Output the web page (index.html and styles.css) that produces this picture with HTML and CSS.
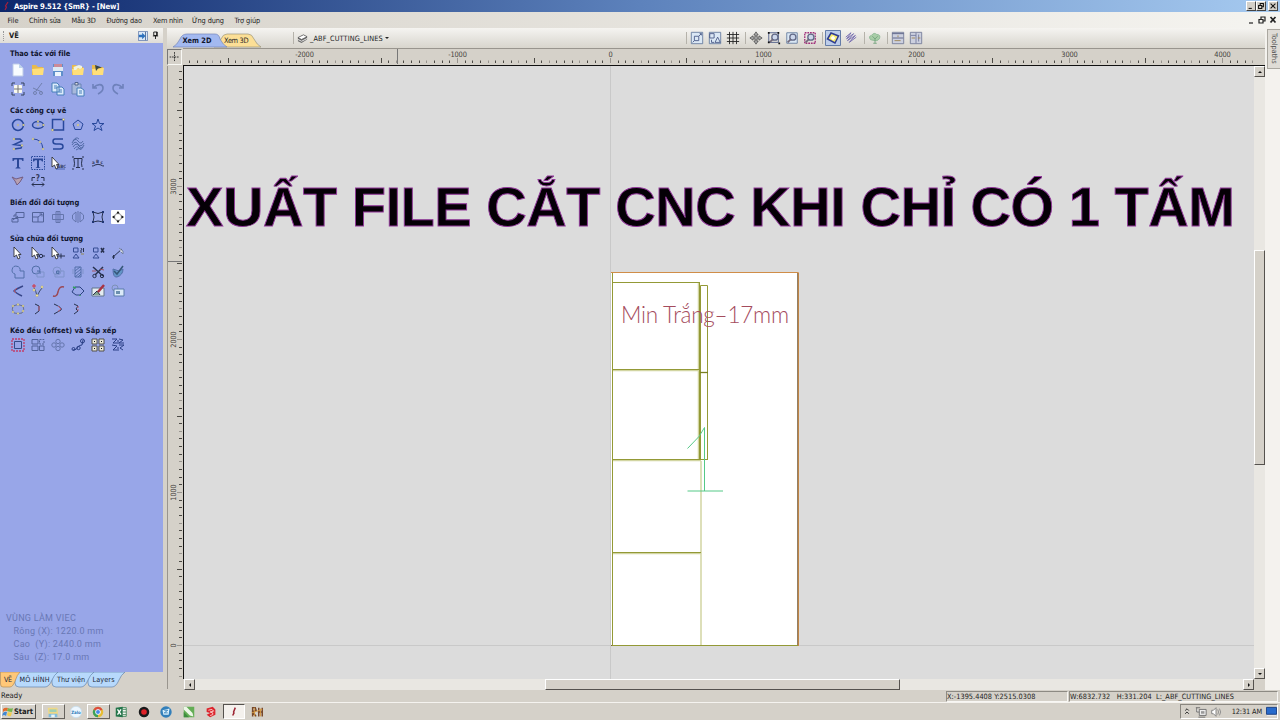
FILE: index.html
```html
<!DOCTYPE html>
<html lang="vi">
<head>
    <meta charset="UTF-8">
    <title>Aspire 9.512 {SmR} - [New]</title>
    <link rel="stylesheet" href="styles.css">
</head>
<body>
    <div class="titlebar">
        <svg class="logo" viewBox="0 0 12 12"><path d="M8 2L5.500 6L6.500 7L5 10" stroke="#a51f3c" stroke-width="1.2" fill="none"/></svg>
        <span class="title">Aspire 9.512 {SmR} - [New]</span>
        <div class="winbtns">
            <svg viewBox="0 0 10 10"><path d="M2 8H6"/></svg>
            <svg viewBox="0 0 10 10"><path d="M4 4V2H8V6H6M2 4.500H6V8H2Z"/></svg>
            <svg class="close" viewBox="0 0 10 10"><path d="M2 2L8 8M8 2L2 8"/></svg>
        </div>
    </div>
    <div class="menubar">
        <span class="m1">File</span><span class="m2">Chỉnh sửa</span><span class="m3">Mẫu 3D</span><span class="m4">Đường dao</span><span class="m5">Xem nhìn</span><span class="m6">Ứng dụng</span><span class="m7">Trợ giúp</span>
        <div class="docbtns">
            <svg viewBox="0 0 10 10"><path d="M3 8H7"/></svg>
            <svg viewBox="0 0 10 10"><path d="M4 4V2H8V6H6M2 4.500H6V8H2Z"/></svg>
            <svg viewBox="0 0 10 10"><path d="M2.500 2L7.500 7.500M7.500 2L2.500 7.500" stroke-width="1.700"/></svg>
        </div>
    </div>

    <div class="main">
        <div class="sidebar">
            <div class="side-head">
                <i class="grip"></i><b>VẼ</b>
                <svg class="dock" viewBox="0 0 12 12"><path d="M.5.5H11.500V11.500H.5Z" fill="#dce8f6" stroke="#6680ad"/><path d="M9 1V11" stroke="#42608d"/><path d="M1 4.500H5V2L9 6L5 10V7.500H1Z" fill="#2d71bd"/></svg>
                <svg class="pin" viewBox="0 0 8 10"><path d="M2 1H6V5H2ZM1 5.500H7M4 5.500V9M5.300 1V5" fill="none" stroke="#111"/></svg>
            </div>
            <div class="side-body">
                <section class="s1">
                    <h3>Thao tác với file</h3>
                    <div class="tools">
                        <svg viewBox="0 0 16 16"><path d="M3 2H9L13 6V14H3Z" fill="#f8fcff" stroke="#bdcbe7"/><path d="M9 2V6H13" fill="#bfd5ec"/></svg>
                        <svg viewBox="0 0 16 16"><use href="#folder"/></svg>
                        <svg viewBox="0 0 16 16"><path d="M3 2H13V14H3Z" fill="#5f8fca"/><path d="M4 2H12V5H4Z" fill="#cb8a98"/><path d="M3 5H13V9H3Z" fill="#dbe9f5"/><path d="M5 10H11V14H5Z" fill="#eef5fc"/></svg>
                        <svg viewBox="0 0 16 16"><use href="#folder"/><path d="M3.500 5L9 3L12 4V6L10 7L8 6L6 8L4 8Z" fill="#eff3e3"/></svg>
                        <svg viewBox="0 0 16 16"><use href="#folder"/><path d="M5 3L12 5.500L8 6.500L6 9Z" fill="#394849"/></svg>
                    </div>
                    <div class="tools line">
                        <svg viewBox="0 0 16 16"><path d="M2 5V2H5M11 2H14V5M14 11V14H11M5 14H2V11" stroke="#34435d"/><path d="M4.500 4.500H11.500V11.500H4.500Z" fill="#f9f9ee" stroke="#f9f9ee"/><path d="M8 4V12M4 8H12" stroke="#777"/></svg>
                        <svg viewBox="0 0 16 16" class="faint"><path d="M12 2L6 10M3 7L12 11"/><circle cx="5" cy="12" r="1.500"/><circle cx="11" cy="12" r="1.500"/></svg>
                        <svg viewBox="0 0 16 16"><path d="M2 2H7L9 4V11H2ZM7 6H12L14 8V14H7Z" fill="#dcebfb" stroke="#477eb9"/><path d="M4 5H7M4 7H7M9 9H12M9 11H12" stroke="#477eb9"/></svg>
                        <svg viewBox="0 0 16 16"><path d="M2 3H11V13H2Z" fill="#a7b9db" stroke="#6b84b7"/><path d="M5 1.500H8V4H5Z" fill="#ddd"/><path d="M7 7H11L14 9V15H7Z" fill="#dcebfb" stroke="#477eb9"/><path d="M9 10H12M9 12H12" stroke="#477eb9"/></svg>
                        <svg viewBox="0 0 16 16" class="undo"><path d="M3 3V7H7M3 7C8 2 13 3 13 7C13 10 10 12 8 13"/></svg>
                        <svg viewBox="0 0 16 16" class="undo"><path d="M13 3V7H9M13 7C8 2 3 3 3 7C3 10 6 12 8 13"/></svg>
                    </div>
                </section>

                <section class="s2">
                    <h3>Các công cụ vẽ</h3>
                    <div class="tools blue">
                        <svg viewBox="0 0 16 16"><circle cx="8" cy="8" r="5.500"/><circle class="dot" cx="8" cy="8" r=".8"/><circle class="dot" cx="13.500" cy="8" r=".9"/></svg>
                        <svg viewBox="0 0 16 16"><ellipse cx="8" cy="8" rx="5.500" ry="3.500"/><circle class="dot" cx="8" cy="4.500" r=".9"/><circle class="dot" cx="8" cy="8" r=".8"/><circle class="dot" cx="13.500" cy="8" r=".9"/></svg>
                        <svg viewBox="0 0 16 16"><path d="M2.500 2.500H13.500V13H2.500Z"/><circle class="dot" cx="13.500" cy="2.500" r="1.100"/><circle class="dot" cx="2.500" cy="13" r="1.100"/></svg>
                        <svg viewBox="0 0 16 16" class="thin"><path d="M8 3L13 7L11 12.500H5L3 7Z"/><circle class="dot" cx="8" cy="8" r="1"/></svg>
                        <svg viewBox="0 0 16 16" class="thin"><path d="M8 2L9.500 6.500H14L10.500 9L12 13.500L8 11L4 13.500L5.500 9L2 6.500H6.500Z"/></svg>
                    </div>
                    <div class="tools blue">
                        <svg viewBox="0 0 16 16"><path d="M4 3H10L12 5L4 8.500L12 9.500L11 12L4 13"/><circle class="dot" cx="4" cy="3" r="1"/><circle class="dot" cx="12" cy="9.500" r="1"/><circle class="dot" cx="4" cy="13" r="1"/></svg>
                        <svg viewBox="0 0 16 16" class="thin"><path d="M3 3Q12 3 13 13"/><circle class="dot" cx="3" cy="3" r="1"/><circle class="dot" cx="10" cy="6" r="1"/><circle class="dot" cx="13" cy="13" r="1"/></svg>
                        <svg viewBox="0 0 16 16"><path d="M13 3H5Q3 3 3 5.500Q3 8 6 8H10Q13 8 13 10.500Q13 13 10 13H3"/></svg>
                        <svg viewBox="0 0 16 16" class="swirl"><path d="M2 7Q5 1 8 5T13 5M2 9Q5 4 8 8T14 7M3 11Q6 6 9 10T14 9M4 13Q7 9 9 12T13 11M3 5Q6 0 9 3M6 14Q8 12 11 13"/></svg>
                    </div>
                    <div class="tools blue">
                        <svg viewBox="0 0 16 16"><path class="solid" d="M2.500 3H13.500V6H12.500L11.500 4.500H9V12L10.500 13V13.500H5.500V13L7 12V4.500H4.500L3.500 6H2.500Z"/></svg>
                        <svg viewBox="0 0 16 16"><path d="M1.500 1.500H14.500V14.500H1.500Z" stroke-width="1" stroke-dasharray="1.500 1"/><path class="solid" d="M3 3.500H13V6.500H12L11 5.200H9V12L10.500 13H5.500L7 12V5.200H5L4 6.500H3Z"/></svg>
                        <svg viewBox="0 0 16 16"><use href="#cursor"/><text class="glyph" x="7" y="12.500">ABC</text><path d="M6 14H15" class="hair"/></svg>
                        <svg viewBox="0 0 16 16" class="dark"><path d="M4 5V3.500H12V5M8 3V12.500M6 12.500H10M2 2H4M12 2H14M2 14H4M12 14H14M4 5Q5 8 4 12M12 5Q11 8 12 12"/></svg>
                        <svg viewBox="0 0 16 16" class="dark"><text class="glyph" x="2" y="8.500">a</text><text class="glyph" x="6" y="7.500">B</text><text class="glyph" x="10.500" y="8.500">c</text><path d="M2 11Q4 11 5 10Q8 8.500 11 10Q12 11 14 11"/></svg>
                    </div>
                    <div class="tools blue">
                        <svg viewBox="0 0 16 16"><path d="M2 4L6 6L13 4L10 9L7 12L5 8Z" fill="#b7a0b1" stroke="#735d83" stroke-width="1"/></svg>
                        <svg viewBox="0 0 16 16" class="dark"><path d="M2 11.500H14M4 9.500L2 11.500L4 13.500M12 9.500L14 11.500L12 13.500M2 8V4.500H5M11 4.500H14V8"/><text class="glyph question" x="5.800" y="8">?</text></svg>
                    </div>
                </section>

                <section class="s3">
                    <h3>Biến đổi đối tượng</h3>
                    <div class="tools gray">
                        <svg viewBox="0 0 16 16"><path d="M6 3.500H14V8.500H6ZM2 9.500H8V13H2ZM4 8V6H6M3 11L8 7"/></svg>
                        <svg viewBox="0 0 16 16"><path d="M2.500 3.500H13.500V13H2.500ZM2.500 8H8V13M8 8L12 5M9.500 5H12V7.500"/></svg>
                        <svg viewBox="0 0 16 16" class="mid"><path d="M6 2.500H10V13.500H6ZM2.500 5.500H13.500V10.500H2.500ZM8 2V14"/></svg>
                        <svg viewBox="0 0 16 16" class="mid"><path d="M6 3V13L2.500 10V6ZM10 3L13.500 6V10L10 13ZM8 2V14"/></svg>
                        <svg viewBox="0 0 16 16" class="dark"><path d="M3 3Q8 6 13 3Q11 8 13 13Q8 11 3 13Q5 8 3 3Z"/><path class="navy" d="M2 2h2v2H2zM12 2h2v2h-2zM2 12h2v2H2zM12 12h2v2h-2z"/></svg>
                        <svg viewBox="0 0 16 16"><path d="M1.500 1.500H14.500V14.500H1.500Z" fill="#fff" stroke="#fff"/><circle cx="8" cy="8" r="3.500" stroke="#999"/><path class="black" d="M8 2L9.700 4.500H6.300ZM8 14L9.700 11.500H6.300ZM2 8L4.500 6.300V9.700ZM14 8L11.500 6.300V9.700Z"/></svg>
                    </div>
                </section>

                <section class="s4">
                    <h3>Sửa chữa đối tượng</h3>
                    <div class="tools dark">
                        <svg viewBox="0 0 16 16"><use href="#cursor" x="2"/></svg>
                        <svg viewBox="0 0 16 16"><use href="#cursor"/><circle cx="11" cy="11" r="1.700"/><path d="M7 11H9M13 11H15"/></svg>
                        <svg viewBox="0 0 16 16"><use href="#cursor"/><path d="M7 11H15M11 8.500V13.500"/></svg>
                        <svg viewBox="0 0 16 16"><path d="M3.500 3H8V7H3.500ZM6 9L9 13H3Z" stroke="#354c93"/><path d="M11 3L12 5M13.500 3V7M11 5V8"/><path d="M11 9H14" stroke="#948952"/></svg>
                        <svg viewBox="0 0 16 16"><path d="M3.500 3H8V7H3.500ZM6 9L9 13H3Z" stroke="#354c93"/><path d="M11 3L14 7.500M14 3L11 7.500" stroke-width="1.500"/></svg>
                        <svg viewBox="0 0 16 16"><path d="M3 12L12 4M2 12H5M3.500 10V14"/><path d="M9 3L13 6V9L11 7" fill="#dbe0e6" stroke="#7381a1"/></svg>
                    </div>
                    <div class="tools weld">
                        <svg viewBox="0 0 16 16"><path d="M10 7A4 4 0 1 0 5 10V14H14V7Z"/></svg>
                        <svg viewBox="0 0 16 16"><circle cx="6" cy="6" r="4"/><path class="pale" d="M7 8H14V13H7Z"/><path d="M7 7H10V10"/></svg>
                        <svg viewBox="0 0 16 16"><circle class="pale" cx="7" cy="7" r="4"/><path class="pale" d="M7 7H14V13H5V9"/><path d="M6.500 7H9V9.500H6.500Z" fill="#7d9acc"/></svg>
                        <svg viewBox="0 0 16 16"><path d="M5 3H11V13H5ZM5 7L10 3M5 10L11 5M5 13L11 8M8 13L11 10"/><path class="pale" d="M3 5V10M13 5V10"/></svg>
                        <svg viewBox="0 0 16 16" class="dark"><path d="M3 3L13 12M13 3L5 11" stroke-width="1.500"/><path d="M2 7H6M10 5L14 6" stroke="#a35464"/><circle cx="4.500" cy="12" r="1.700"/><circle cx="12" cy="12" r="1.700"/></svg>
                        <svg viewBox="0 0 16 16"><path d="M3 5Q3 14 7 13Q13 11 13 5L9 7Z" fill="#6396c7"/><path d="M13 2L7 10L4 7" stroke="#345778" stroke-width="1.500"/></svg>
                    </div>
                    <div class="tools dark">
                        <svg viewBox="0 0 16 16"><path d="M13 3Q6 6 4 8Q6 10 12 13" stroke="#37468a" stroke-width="1.500"/><path d="M7 5L4 8L6 10" stroke="#a85068"/></svg>
                        <svg viewBox="0 0 16 16"><path d="M4 5Q6 8 7 13Q10 7 12 5" stroke="#405070"/><path d="M2 3H6M4 1V5" stroke="#d43543"/><circle class="dot" cx="4" cy="7" r="1.200"/><circle class="dot" cx="7" cy="12.500" r="1.200"/><circle class="dot" cx="12" cy="4" r="1.200"/></svg>
                        <svg viewBox="0 0 16 16"><path d="M3 13Q7 14 8 9Q9 3 14 4" stroke="#9a4955" stroke-width="1.500"/></svg>
                        <svg viewBox="0 0 16 16"><path d="M5 4H10L14 8L10 12H6L2 9Z" stroke="#2c4281"/><path d="M3 4L6 5M10 12V13" stroke="#32a05e" stroke-width="1.500"/></svg>
                        <svg viewBox="0 0 16 16"><path d="M2 5H14V13H2Z" fill="#e4ecf1" stroke="#61758b"/><path d="M3 12L7 8L10 12" fill="#85a68e"/><path d="M14 2L8 9" stroke="#a83242" stroke-width="2.500"/></svg>
                        <svg viewBox="0 0 16 16"><circle cx="5" cy="5" r="3" stroke="#7c91b5"/><path d="M4 6H14V13H4Z" fill="#dbeaf8" stroke="#587aaa"/><path d="M6 8H10V11H6Z" fill="#6b8fae" stroke="none"/></svg>
                    </div>
                    <div class="tools dark">
                        <svg viewBox="0 0 16 16"><path d="M3 5Q8 2 13 5Q15 8 12 12Q8 13 4 12Q1 8 3 5Z" stroke="#67708d"/><g class="dots"><circle cx="3" cy="5" r="1"/><circle cx="8" cy="3.500" r="1"/><circle cx="13" cy="5" r="1"/><circle cx="13" cy="10" r="1"/><circle cx="8" cy="12.500" r="1"/><circle cx="3" cy="11" r="1"/></g></svg>
                        <svg viewBox="0 0 16 16"><path d="M5 3L9 5V10L5 13"/><path d="M9 5V10" stroke="#b65870"/></svg>
                        <svg viewBox="0 0 16 16"><path d="M4 3Q13 7 11 9L4 13"/><path d="M8 5L11 8L8 10.500" stroke="#b65870"/></svg>
                        <svg viewBox="0 0 16 16"><path d="M4 3L8 5L6 8L8 10L4 13"/><path d="M8 5V11" stroke="#b65870" stroke-dasharray="2 1"/></svg>
                    </div>
                </section>

                <section class="s5">
                    <h3>Kéo đều (offset) và Sắp xếp</h3>
                    <div class="tools gray">
                        <svg viewBox="0 0 16 16"><path d="M2 2H14V14H2Z" stroke="#c13e69" stroke-dasharray="2 1" stroke-width="1.300"/><path d="M4.500 4.500H11.500V11.500H4.500Z" stroke="#354b88"/></svg>
                        <svg viewBox="0 0 16 16"><path d="M2 2.500H8V7H2ZM2 9H8V13.500H2ZM9.500 9H14V13.500H9.500Z"/><path d="M9.500 2.500H14V7H9.500Z" stroke-dasharray="2 1"/></svg>
                        <svg viewBox="0 0 16 16" class="mid"><circle cx="8" cy="4.500" r="2.200"/><circle cx="4" cy="8" r="2.200"/><circle cx="12" cy="8" r="2.200"/><circle cx="8" cy="11.500" r="2.200"/></svg>
                        <svg viewBox="0 0 16 16" class="navyline"><path d="M3 13Q7 13 8 10Q9 8 12 8L13 3"/><circle cx="3.500" cy="12" r="1.500"/><circle cx="8.500" cy="11" r="1.700"/><circle cx="12.500" cy="4" r="2"/></svg>
                        <svg viewBox="0 0 16 16"><path d="M2 2H7V7H2ZM9 2H14V7H9ZM2 9H7V14H2ZM9 9H14V14H9Z" fill="#e9e7d9" stroke="#504f49"/><path class="black" d="M4 4h1v1H4zM11 4h1v1h-1zM4 11h1v1H4zM11 11h1v1h-1z"/></svg>
                        <svg viewBox="0 0 16 16" class="navyline"><path d="M2 2H7L3 6H7M9 2L13 3L9 6L14 6M2 8L7 9L3 13H7M9 8H14L10 11L13 13M8 3V7M8 10V14"/></svg>
                    </div>
                </section>
                <div class="job">
                    <div>VÙNG LÀM VIEC</div>
                    <p>Rông (X): 1220.0 mm</p>
                    <p>Cao &nbsp;(Y): 2440.0 mm</p>
                    <p>Sâu &nbsp;(Z): 17.0 mm</p>
                </div>
            </div>
            <svg class="side-tabs" viewBox="0 0 163 16">
                <path class="stab" d="M88 0H125Q121 3 119 8Q116 15 112 15H92Q88 15 88 11Z"/>
                <path class="stab" d="M52 0H94Q90 3 88 8Q85 15 81 15H56Q52 15 52 11Z"/>
                <path class="stab" d="M15 0H58Q54 3 52 8Q49 15 45 15H19Q15 15 15 11Z"/>
                <path class="stab on" d="M0.500 0H20Q17 3 15.500 8Q13 15 10 15H3Q0.500 15 0.500 12Z"/>
                <text x="4" y="10" textLength="8">VẼ</text>
                <text x="19.500" y="10" textLength="30">MÔ HÌNH</text>
                <text x="57" y="10" textLength="28">Thư viện</text>
                <text x="92.500" y="10" textLength="22">Layers</text>
            </svg>
        </div>

        <div class="view">
            <div class="viewbar">
                <svg class="viewtabs" viewBox="0 0 96 18">
                    <path d="M47 17Q51 15 54 9Q56 4 60 4H81Q85 4 87 9Q90 15 94 17Z" fill="#fcdf96" stroke="#9b967d" stroke-width=".7"/>
                    <path d="M6 17Q10 15 13 9Q15 4 20 4H48Q52 4 53 9Q56 15 60 17Z" fill="#a3b9f0" stroke="#7687ba" stroke-width=".7"/>
                    <text x="15.500" y="13" textLength="29" class="bold">Xem 2D</text>
                    <text x="57" y="13" textLength="24.500">Xem 3D</text>
                </svg>
                <i class="sep first"></i>
                <svg class="layericon" viewBox="0 0 12 12"><path d="M1 5L7 2L11 4V7L5 11L1 9Z" fill="#6b6b6b"/><path d="M1 5L7 2L11 4L5 7Z" fill="#fff" stroke="#444" stroke-width=".7"/><path d="M1 7L5 9L11 6" stroke="#eee" fill="none"/></svg>
                <span class="layername">_ABF_CUTTING_LINES</span><i class="arrow"></i>
                <div class="viewtools">
                    <i class="sep"></i>
                    <svg viewBox="0 0 16 16"><path class="frame" d="M1.500 1.500H14.500V14.500H1.500Z"/><path d="M5 6H10V11H5ZM10 6L13 3M11 3H13V5M5 11L3 13"/></svg>
                    <svg viewBox="0 0 16 16"><path class="frame" d="M1.500 1.500H14.500V14.500H1.500Z"/><path d="M2 3H7V8H2ZM11 7L14 13H8ZM4 10V13H7"/></svg>
                    <svg viewBox="0 0 16 16"><path d="M4 1V15M8 1V15M12 1V15M1 4H15M1 8H15M1 12H15" stroke="#222"/></svg>
                    <i class="sep"></i>
                    <svg viewBox="0 0 16 16"><path d="M8 1L10.500 4.500H9V7H11.500V5.500L15 8L11.500 10.500V9H9V11.500H10.500L8 15L5.500 11.500H7V9H4.500V10.500L1 8L4.500 5.500V7H7V4.500H5.500Z" fill="#aaa" stroke="#444" stroke-width=".8"/></svg>
                    <svg viewBox="0 0 16 16"><path d="M2 2H13V13H2Z"/><use href="#lens"/><path class="black" d="M1 1h2v2H1zM12 1h2v2h-2zM1 12h2v2H1zM13 13h2v2h-2z"/></svg>
                    <svg viewBox="0 0 16 16"><path class="frame" d="M2 2H14V14H2Z"/><use href="#lens"/></svg>
                    <svg viewBox="0 0 16 16"><path d="M2 2H14V14H2Z" stroke="#a1327c" stroke-width="1.500" stroke-dasharray="2 1"/><use href="#lens"/></svg>
                    <i class="sep"></i>
                    <svg class="wide" viewBox="0 0 16 16"><path d="M.5.5H15.500V15.500H.5Z" fill="#bdcde9" stroke="#647ca8"/><path d="M2.500 9L6 3L13.500 6L10 13Z" fill="#f8ed72" stroke="#303d91" stroke-width="1.500"/><path d="M6 8H10M8 6V10" stroke="#fff" stroke-width="1.500"/></svg>
                    <svg viewBox="0 0 16 16"><path d="M2 7L8 2M3 9L11 3M4 11L13 5M6 13L14 7M8 2L3 9M11 3L4 11M13 5L6 13" stroke="#6f66ae"/></svg>
                    <i class="sep"></i>
                    <svg viewBox="0 0 16 16"><path d="M3 10Q0 6 4 5Q7 1 10 4Q15 4 13 9Q10 12 8 11Z" fill="#a8cda7" stroke="#8cb893"/><path d="M5 6L8 9L11 6M8 8V14M6 14H10" stroke="#70a17a"/></svg>
                    <i class="sep"></i>
                    <svg viewBox="0 0 16 16"><path class="panel" d="M1.500 1.500H14.500V14.500H1.500Z"/><path d="M2 8H14M1.500 3H14.500" stroke="#555c80"/><path d="M4 11H11M8 5V7" stroke="#9b824e"/></svg>
                    <svg viewBox="0 0 16 16"><path class="panel" d="M1.500 1.500H14.500V14.500H1.500Z"/><path d="M8 2V14M11 4V12M2 5H8" stroke="#73799b"/><path d="M3 8H7M10 8H13" stroke="#9b824e"/></svg>
                </div>
            </div>

            <div class="work">
                <div class="corner"><svg viewBox="0 0 16 16"><path d="M8 2V14M2 8H14" stroke="#111" stroke-dasharray="2 1"/></svg></div>
                <svg class="hruler" id="hruler" viewBox="183 49 1082 16"></svg>
                <svg class="vruler" id="vruler" viewBox="167 66 15 623"></svg>
                <div class="canvas">
                    <svg viewBox="184 66 1070 613">
                        <path class="axis" d="M610.500 66V679M184 645.500H1254"/>
                        <rect x="611" y="272" width="188" height="374" fill="#fff"/>
                        <path class="sheet" d="M611 272.500H798.500V646"/>
                        <path class="sheet-edge" d="M797.700 273V645.500H611"/>
                        <path class="cut soft" d="M698.500 283V460M612 370.500H699M612 460.500H701M701 461V645M612 553.500H701"/>
                        <path class="cut" d="M612.500 273V646M612 282.500H699M612 369.500H699M612 459.500H708M699.500 282V459M700.500 285.500H707.500V459.500H700.500ZM612 552.500H701M612 645.500H798"/>
                        <path class="cut joint" d="M700 372.500H708"/>
                        <path class="numeral" d="M687.500 448.500L699 436.500L704.500 427.500V491M687.500 491H723"/>
                        <text class="material" x="621" y="323" textLength="168">Min Trắng–17mm</text>
                        <text class="headline" x="186" y="225.500" textLength="1049">XUẤT FILE CẮT CNC KHI CHỈ CÓ 1 TẤM</text>
                    </svg>
                </div>
                <div class="vscroll"><i class="sbtn up"></i><i class="vthumb"></i><i class="sbtn down"></i></div>
                <div class="hscroll"><i class="sbtn left"></i><i class="hthumb"></i><i class="sbtn right"></i></div>
            </div>
        </div>
        <div class="rail"><span>Toolpaths</span></div>
    </div>

    <div class="status">
        <span class="ready">Ready</span>
        <span class="pos">X:-1395.4408 Y:2515.0308</span>
        <span class="dims">W:6832.732 &nbsp; H:331.204 &nbsp;L:_ABF_CUTTING_LINES</span>
    </div>

    <div class="taskbar">
        <div class="start"><svg viewBox="0 0 12 12"><path d="M1 3Q3 1 6 2L5 5Q3 4 1 6Z" fill="#e46b2c"/><path d="M6 2Q9 3 11 2L10 6Q8 6 5 5Z" fill="#76b64e"/><path d="M1 7Q3 5 5 6L4 10Q2 8 0 10Z" fill="#4087d2"/><path d="M6 6Q8 7 10 6L9 10Q7 11 5 9Z" fill="#f3cc4c"/></svg><b>Start</b></div>
        <div class="task raised"><svg viewBox="0 0 16 16"><path d="M2 3H13L14 12H3Z" fill="#efd886"/><path d="M4 5H12V8H4Z" fill="#a0cfb3"/><path d="M3 10H13V14H3Z" fill="#83bddc"/><path d="M6 11H10V14H6Z" fill="#ebf5f6"/></svg></div>
        <div class="task"><svg viewBox="0 0 16 16"><circle cx="8" cy="8" r="6.500" fill="#edf7ff" stroke="#c8ddea"/><text x="2.500" y="10" class="zalo" textLength="11">Zalo</text></svg></div>
        <div class="task raised"><svg viewBox="0 0 16 16"><circle cx="8" cy="8" r="6" fill="#e7bd33"/><path d="M8 8L2.800 5A6 6 0 0 1 13.200 5Z" fill="#dc4c3f"/><path d="M8 8L2.800 5A6 6 0 0 0 8 14Z" fill="#3ba15b"/><circle cx="8" cy="8" r="2.800" fill="#4688e8" stroke="#fff"/></svg></div>
        <div class="task"><svg viewBox="0 0 16 16"><path d="M8 3H14V13H8Z" fill="#f4f7f2" stroke="#3d8257"/><path d="M10 5H14M10 8H14M10 11H14" stroke="#3d8257"/><path d="M2 3L10 2V14L2 13Z" fill="#23754a"/><path d="M4 5L8 11M8 5L4 11" stroke="#fff" stroke-width="1.500"/></svg></div>
        <div class="task"><svg viewBox="0 0 16 16"><circle cx="8" cy="8" r="6" fill="#18191a"/><circle cx="8" cy="8" r="3.200" fill="#df2127"/></svg></div>
        <div class="task"><svg viewBox="0 0 16 16"><circle cx="8" cy="8" r="6.500" fill="#327fba"/><path d="M4 6L12 4L11 11H5Z" fill="#d9f0fc"/><path d="M6 6H10L6 9H10" stroke="#327fba" fill="none"/></svg></div>
        <div class="task"><svg viewBox="0 0 16 16"><path d="M2 2H14V14H2Z" fill="#63ad55"/><path d="M2 2H5L12 9L13 13L9 12L2 5Z" fill="#edf7e8"/><path d="M2 14V8L8 14Z" fill="#3d8d3e"/></svg></div>
        <div class="task"><svg viewBox="0 0 16 16"><path d="M3 4L10 2L13 5V11L7 14L3 11L7 9L3 8Z" fill="#dc252d"/><path d="M5 6L9 5L11 7L7 8L10 9V11L7 12" stroke="#ffd8d2" fill="none"/></svg></div>
        <div class="task raised active"><svg viewBox="0 0 16 16"><path d="M9.500 3L7.500 8L8 9L6.500 12" stroke="#9d2433" stroke-width="1.700" fill="none"/></svg></div>
        <div class="task"><svg viewBox="0 0 16 16"><path d="M3 13V3H6L7 6L3 8L7 13M10 3V13M14 3V13M9 8H14" stroke="#76472a" stroke-width="1.700" fill="none"/><path d="M2 9L14 5M5 3V13M12 4V13" stroke="#d6983e"/></svg></div>
        <div class="tray">
            <svg viewBox="0 0 10 12"><path d="M3 5L5 3L7 5M3 8.500L5 6.500L7 8.500" stroke="#222" fill="none"/></svg>
            <svg class="net" viewBox="0 0 14 14"><path d="M5 4H13V11H5ZM2 2V7H5M1 2H6M4 13H12" stroke="#666" fill="#eee"/><path d="M7 6H11V9H7Z" fill="#999"/></svg>
            <svg class="sound" viewBox="0 0 14 14"><path d="M2 5H4L7 2V12L4 9H2Z" fill="#fff" stroke="#777"/><path d="M9 4Q11 7 9 10M11 3Q14 7 11 11" stroke="#888" fill="none"/></svg>
            <span>12:31 AM</span>
            <svg class="desk" viewBox="0 0 12 12"><path d="M.5 1.500H11.500V9H.5Z" fill="#286bcc" stroke="#183e83"/><path d="M1 10.500H11" stroke="#eee"/></svg>
        </div>
    </div>

    <svg class="defs">
        <defs>
            <g id="folder"><path d="M2 3H6L8 5H13V13H2Z" fill="#e7ba4e"/><path d="M2 7L14 6L13 13H3Z" fill="#ffdf79"/></g>
            <g id="cursor"><path d="M2 2V12L4.500 10L6 14L8 13L6.500 9.500H9Z" fill="#fff" stroke="#222" stroke-width=".8"/></g>
            <g id="lens"><circle cx="9" cy="7" r="3.500" fill="#cdd7eb" stroke="#626986" stroke-width="1.500"/><path d="M6.500 9.500L3 13" stroke="#72687a" stroke-width="2"/></g>
        </defs>
    </svg>

    <script>
        const NS = 'http://www.w3.org/2000/svg';
        const PX = 0.15297; // pixels per mm

        function add(parent, tag, attrs, text) {
            const el = document.createElementNS(NS, tag);
            for (const k in attrs) el.setAttribute(k, attrs[k]);
            if (text !== undefined) el.textContent = text;
            parent.appendChild(el);
        }

        const h = document.getElementById('hruler');
        for (let mm = -2750; mm <= 4200; mm += 50) {
            const x = Math.floor(610.5 + mm * PX) + 0.5;
            const len = mm % 500 === 0 ? 5 : 2.5;
            add(h, 'path', { d: `M${x} ${63 - len}V63`, class: mm % 200 === 0 ? 'tick light' : 'tick' });
            if (mm % 1000 === 0) add(h, 'text', { x: x, y: 56.5, 'text-anchor': 'middle' }, mm);
        }
        add(h, 'path', { d: 'M397.500 49V64', class: 'marker' });

        const v = document.getElementById('vruler');
        for (let mm = -200; mm <= 3750; mm += 50) {
            const y = Math.floor(645.5 - mm * PX) + 0.5;
            const len = mm % 500 === 0 ? 5 : 3;
            add(v, 'path', { d: `M${181 - len} ${y}H181`, class: mm % 200 === 0 ? 'tick light' : 'tick' });
            if (mm % 1000 === 0) add(v, 'text', { transform: `translate(174.500 ${y}) rotate(-90)`, 'text-anchor': 'middle' }, mm);
        }
        add(v, 'path', { d: 'M167 261.500H181', class: 'marker' });
    </script>
</body>
</html>
```

FILE: styles.css
```css
* { box-sizing: border-box; }
body { margin: 0; width: 1280px; height: 720px; overflow: hidden; background: #d5d1c9; color: #222; font-family: "DejaVu Sans Condensed", "DejaVu Sans", sans-serif; font-size: 7.3px; display: flex; flex-direction: column; }
svg { display: block; flex: none; }
.defs { width: 0; height: 0; }

.titlebar { height: 12px; flex: none; display: flex; align-items: center; background: linear-gradient(90deg, #0d276b, #5d82bc 50%, #a6caf0); color: #fff; }
.logo { width: 12px; height: 12px; margin-right: 2px; }
.title { font-weight: bold; font-size: 7.7px; letter-spacing: -0.18px; }
.winbtns { display: flex; margin-left: auto; padding-right: 2px; }
.winbtns svg { width: 10px; height: 10px; background: #d4d0c8; border: 1px solid; border-color: #fff #444 #444 #fff; stroke: #111; fill: none; stroke-width: 1.3; }
.winbtns .close { margin-left: 2px; }

.menubar { height: 16px; flex: none; display: flex; align-items: center; background: linear-gradient(90deg, #d6d2ca, #f5f4f0); }
.menubar span { white-space: nowrap; flex: none; }
.m1 { width: 21.5px; margin-left: 7.5px; }
.m2 { width: 42.500px; letter-spacing: -0.1px; }
.m3 { width: 35px; letter-spacing: -0.18px; }
.m4 { width: 46.500px; letter-spacing: -0.04px; }
.m5 { width: 39px; letter-spacing: -0.15px; }
.m6 { width: 42.500px; letter-spacing: -0.1px; }
.m7 { letter-spacing: -0.05px; }
.docbtns { margin-left: auto; display: flex; gap: 1px; padding-right: 2px; }
.docbtns svg { width: 10px; height: 10px; stroke: #222; fill: none; stroke-width: 1.2; }

.main { height: 662px; flex: none; display: flex; }

/* left panel */
.sidebar { width: 163px; display: flex; flex-direction: column; flex: none; }
.side-head { height: 15px; display: flex; align-items: center; background: linear-gradient(#f5f4f1, #e0ddd7); }
.side-head b { flex: 1; font-size: 7.5px; }
.grip { height: 10px; width: 2px; margin: 0 4px 0 3px; border-left: 1px dotted #999; }
.dock { width: 10px; height: 10px; margin-right: -2px; }
.pin { width: 7px; height: 9px; margin: 0 4px 0 6px; }
.side-body { height: 629px; background: #98a6e8; padding: 4px 0 0 10px; display: flex; flex-direction: column; }
h3 { margin: 0; height: 12px; line-height: 13px; font-size: 7.5px; letter-spacing: -0.03px; white-space: nowrap; color: #10152e; }
.s1 h3 { height: 14px; }
.s2 { margin-top: 6px; }
.s3 { margin-top: 5px; }
.s4 { margin-top: 6px; }
.s5 { margin-top: 5px; }
.s5 h3 { letter-spacing: 0.02px; }
.tools { display: flex; height: 18.600px; align-items: center; gap: 4px; fill: none; stroke-width: 1; }
.tools svg { width: 16px; height: 16px; }
.line { stroke: #50648d; }
.faint { stroke: #7180ae; }
.undo { stroke: #6e81bb; stroke-width: 1.6; }
.blue { stroke: #28489b; stroke-width: 1.500; }
.thin { stroke-width: 1; }
.swirl { stroke: #4a649f; stroke-width: 0.9; }
.dark { stroke: #27314e; stroke-width: 1; }
.gray { stroke: #526399; }
.mid { stroke: #6475ac; }
.weld { stroke: #526fa9; }
.pale { stroke: #7f93ca; }
.navyline { stroke: #2a3f86; }
.solid { fill: #2a4797; stroke: none; }
.navy { fill: #203674; stroke: none; }
.black { fill: #111; stroke: none; }
.dot, .dots circle { fill: #f5e99b; stroke: #9d956b; stroke-width: 0.4; }
.glyph { font-size: 4.500px; font-weight: bold; fill: #333b60; stroke: none; }
.question { font-size: 8px; }
.hair { stroke-width: 0.7; }
.job { margin-top: auto; height: 60.500px; margin-left: -4px; font-family: Roboto, sans-serif; font-size: 9px; letter-spacing: 0.28px; line-height: 13.300px; color: #6978b5; white-space: nowrap; }
.job p { margin: 0 0 0 7.500px; }
.side-tabs { width: 163px; height: 16px; }
.side-tabs text { font-size: 7.2px; fill: #1c2738; }
.stab { fill: #b7d9fc; stroke: #6585ad; stroke-width: 0.7; }
.on { fill: #ffc878; stroke: #b28c58; }

/* drawing view */
.view { width: 1102px; flex: none; padding-left: 4px; }
.viewbar { height: 20px; background: linear-gradient(#f5f4f1, #d8d5cd); display: flex; align-items: center; }
.viewtabs { width: 96px; height: 18px; align-self: flex-end; }
.viewtabs text { font-size: 7.4px; fill: #2b2b26; }
.viewtabs .bold { font-weight: bold; fill: #12172e; }
.sep { width: 1px; height: 12px; background: #b5b2aa; flex: none; }
.first { margin-left: 30px; }
.layericon { width: 11px; height: 11px; margin: 0 2px 0 3px; }
.layername { width: 75px; letter-spacing: 0.12px; white-space: nowrap; }
.arrow { border: 2px solid transparent; border-top-color: #222; margin-top: 2px; }
.viewtools { display: flex; align-items: center; margin-left: auto; width: 579px; fill: none; stroke: #485885; }
.viewtools svg { width: 14px; height: 14px; margin: 0 2px; }
.viewtools .wide { width: 16px; height: 16px; margin: 0 1px; }
.viewtools .sep { margin-right: 1px; margin-left: 3.200px; }
.viewtools .sep:first-child { margin-left: 0; }
.frame { fill: #dbe8f5; stroke: #667b9e; }
.panel { fill: #ccd0df; stroke: #747b98; }

.work { display: grid; grid-template: 18px 613px 11px / 17px 1070px 11px; }
.corner { border: 1px solid; border-color: #777 #f8f8f4 #f8f8f4 #777; width: 15px; height: 16px; margin-top: 1px; }
.corner svg { width: 13px; height: 14px; }
.hruler { grid-column: 2 / 4; width: 1082px; height: 18px; margin-left: -1px; border-top: 1px solid #99958e; border-bottom: 1px solid #111; background: #d5d1c9; }
.vruler { grid-row: 2 / 4; width: 16px; height: 623px; border-left: 1px solid #99958e; background: #d5d1c9; }
.tick { stroke: #4b4944; }
.light { stroke: #99958f; }
.marker { stroke: #777; }
.hruler text, .vruler text { font-size: 7.4px; letter-spacing: -0.15px; fill: #47443f; }
.canvas { width: 1071px; margin-left: -1px; background: #dcdcdc; border-left: 1px solid #111; }
.canvas svg { width: 1070px; height: 613px; }
.axis { stroke: #c9c9c9; fill: none; }
.sheet { stroke: #d08d48; fill: none; }
.sheet-edge { stroke: #7b6240; fill: none; }
.cut { stroke: #939936; fill: none; stroke-width: 1; }
.soft { stroke: #d2d5a2; stroke-width: 1.500; }
.joint { stroke: #7a8022; stroke-width: 1.300; }
.numeral { stroke: #55c987; fill: none; }
.material { font-family: Lato, sans-serif; font-size: 22.500px; font-weight: 300; fill: #a54c5d; }
.headline { font-family: "Liberation Sans", Arial, sans-serif; font-size: 56px; font-weight: bold; fill: #050006; stroke: #92379b; stroke-width: 0.9; }
.vscroll, .hscroll { background: #e9e7e2; display: flex; }
.vscroll { flex-direction: column; }
.hscroll { grid-column: 2; }
.vthumb, .hthumb, .sbtn { background: #d5d1c9; border: 1px solid; border-color: #fff #55524e #55524e #fff; }
.vthumb { height: 215px; margin: 173px 0 auto; }
.hthumb { width: 355px; margin: 0 auto 0 350px; }
.sbtn { width: 11px; height: 11px; display: flex; align-items: center; justify-content: center; flex: none; }
.sbtn::before { content: ""; border: 2.5px solid transparent; }
.up::before { border-bottom-color: #111; margin-top: -2px; }
.down::before { border-top-color: #111; margin-top: 2px; }
.left::before { border-right-color: #111; margin-left: -2px; }
.right::before { border-left-color: #111; margin-left: 2px; }

.rail { flex: 1; background: #f4f2ee; padding: 1px 0 0 2px; }
.rail span { display: block; width: 13px; height: 40px; writing-mode: vertical-rl; line-height: 11px; padding-top: 3px; border: 1px solid #aaa7a0; border-right: 0; background: #dfdcd6; font-size: 7.3px; color: #555; letter-spacing: -0.05px; }

/* bottom bars */
.status { height: 12px; flex: none; display: flex; align-items: center; background: #d5d1c9; padding-right: 2px; }
.status span { white-space: nowrap; line-height: 10px; }
.ready { width: 946px; padding-left: 1px; font-size: 7.6px; }
.pos, .dims { height: 11px; border: 1px solid; border-color: #8d8a83 #f8f7f4 #f8f7f4 #8d8a83; }
.pos { width: 122px; letter-spacing: 0.04px; }
.dims { width: 209px; margin-left: 1px; letter-spacing: 0.07px; }
.taskbar { height: 18px; flex: none; border-top: 1px solid #f5f3ef; display: flex; align-items: center; background: #d5d1c9; }
.start { width: 35px; height: 15px; margin: 0 6px 0 1px; display: flex; align-items: center; border: 1px solid; border-color: #fff #55524e #55524e #fff; font-size: 7.6px; letter-spacing: -0.1px; }
.start svg { width: 12px; height: 12px; }
.task { width: 22.600px; height: 15px; display: flex; align-items: center; justify-content: center; flex: none; }
.task svg { width: 14px; height: 14px; }
.raised { border: 1px solid; border-color: #fff #65625d #65625d #fff; }
.active { background: #f4f1ed; border-color: #55524e #fff #fff #55524e; }
.zalo { font-size: 5px; fill: #2b77b7; font-weight: bold; }
.tray { width: 98px; height: 15px; margin: 0 2px 0 auto; border: 1px solid; border-color: #89867f #fff #fff #89867f; display: flex; align-items: center; }
.tray svg { width: 10px; height: 11px; margin-left: 1px; }
.tray .net, .tray .sound { width: 12px; height: 12px; margin-left: 3px; }
.tray span { margin-left: auto; white-space: nowrap; letter-spacing: -0.1px; }
.tray .desk { width: 11px; margin-left: 4px; }
```
